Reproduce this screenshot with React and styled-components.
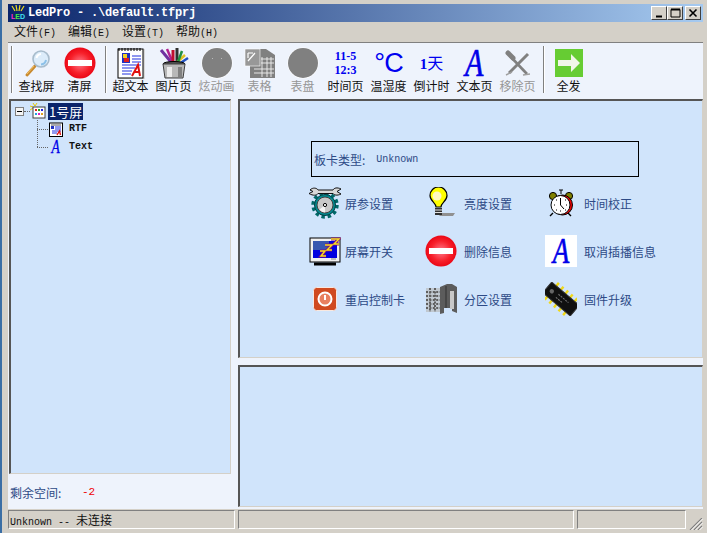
import React from "react";
import styled, { createGlobalStyle } from "styled-components";

const cjk = `"Noto Sans CJK SC", "Liberation Sans", sans-serif`;
const mono = `"Liberation Mono", "Noto Sans CJK SC", monospace`;
const paneBlue = "#d0e4fb";
const clientBlue = "#eef3fc";
const linkBlue = "#2d4a86";

const GlobalStyle = createGlobalStyle`
  html, body { margin: 0; padding: 0; background: #d4d0c8; }
  * { box-sizing: border-box; }
`;

const Frame = styled.div`
  width: 707px;
  height: 533px;
  overflow: hidden;
  display: flex;
  flex-direction: column;
  padding: 4px 4px 3px 6px;
  border-left: 2px solid #3a6ea5;
  background: #d4d0c8;
  font-family: ${cjk};
  font-size: 12px;
`;

const TitleBar = styled.div`
  height: 18px;
  display: flex;
  align-items: center;
  padding: 0 2px 0 1px;
  background: linear-gradient(90deg, #0a246a, #a6caf0);
  flex-shrink: 0;
`;
const Logo = styled.div`
  width: 18px;
  height: 17px;
  display: flex;
  flex-direction: column;
  align-items: center;
  margin-right: 1px;
`;
const LogoText = styled.div`
  font: bold 7px/7px "Liberation Sans", sans-serif;
  letter-spacing: 0;
`;
const LogoLetter = styled.span`
  color: ${(p) => p.$color};
`;
const TitleText = styled.div`
  flex: 1;
  color: #fff;
  font: bold 12px/18px ${mono};
  letter-spacing: -0.2px;
  white-space: pre;
`;
const CaptionButtons = styled.div`
  display: flex;
`;
const CaptionButton = styled.div`
  width: ${(p) => p.$w || 16}px;
  height: 14px;
  margin-left: ${(p) => p.$gap || 0}px;
  background: #d4d0c8;
  border: 1px solid;
  border-color: #fff #404040 #404040 #fff;
  display: flex;
  align-items: center;
  justify-content: center;
`;

const MenuBar = styled.div`
  height: 20px;
  display: flex;
  align-items: center;
  padding-left: 6px;
  flex-shrink: 0;
`;
const MenuItem = styled.div`
  width: 54px;
  color: #111;
  line-height: 20px;
`;
const MenuKey = styled.span`
  font-family: ${mono};
  font-size: 10px;
`;

const Toolbar = styled.div`
  height: 57px;
  flex-shrink: 0;
  display: flex;
  align-items: flex-start;
  padding-top: 4px;
  background: ${clientBlue};
  border-top: 1px solid #808080;
`;
const ToolSep = styled.div`
  width: 2px;
  height: 47px;
  margin: -1px 2px 0 3px;
  border-left: 1px solid #808080;
  border-right: 1px solid #fff;
`;
const ToolGroup = styled.div`
  display: flex;
  padding-right: 1px;
`;
const ToolButton = styled.div`
  width: 43px;
  display: flex;
  flex-direction: column;
  align-items: center;
`;
const ToolIcon = styled.div`
  width: 43px;
  height: 32px;
  display: flex;
  align-items: center;
  justify-content: center;
  flex-direction: column;
  color: #0000f0;
`;
const ToolLabel = styled.div`
  height: 16px;
  margin-top: -1px;
  line-height: 16px;
  white-space: nowrap;
  color: ${(p) => (p.$off ? "#969696" : "#111")};
`;
const ClockText = styled.div`
  font: bold 12px/14px "Liberation Serif", serif;
  color: #0000f0;
`;
const TempText = styled.div`
  font: 27px/32px "Liberation Sans", sans-serif;
  color: #0000f0;
  letter-spacing: -1px;
`;
const DayText = styled.div`
  font: 16px/18px "Noto Sans CJK SC", serif;
  color: #0000f0;
`;
const DayNumber = styled.span`
  font: bold 15px/18px "Liberation Serif", serif;
`;
const ItalicA = styled.span`
  display: inline-block;
  font: italic normal ${(p) => p.$size}px/${(p) => p.$size}px "Liberation Serif", serif;
  -webkit-text-stroke: ${(p) => p.$size / 60}px #0000e8;
  color: #0000e8;
  transform: scaleX(0.75);
`;

const Body = styled.div`
  flex: 1;
  display: grid;
  grid-template-columns: 223px 465px;
  column-gap: 7px;
  background: ${clientBlue};
  padding-bottom: 2px;
  min-height: 0;
`;
const LeftColumn = styled.div`
  display: flex;
  flex-direction: column;
  padding-left: 1px;
`;
const RightColumn = styled.div`
  display: flex;
  flex-direction: column;
  gap: 7px;
`;
const Sunken = styled.div`
  background: ${paneBlue};
  border: 2px solid;
  border-color: #555 #d4d0c8 #d4d0c8 #555;
  border-width: 2px 1px 1px 2px;
`;
const TreePane = styled(Sunken)`
  height: 375px;
  padding: 1px 0 0 4px;
`;
const TreeRoot = styled.div`
  display: flex;
  align-items: center;
  height: 18px;
`;
const Expander = styled.div`
  width: 9px;
  height: 9px;
  border: 1px solid #808080;
  background: #f4f4f4;
  display: flex;
  align-items: center;
  justify-content: center;
`;
const ExpanderDash = styled.div`
  width: 5px;
  height: 1px;
  background: #000;
`;
const RootDots = styled.div`
  width: 6px;
  border-top: 1px dotted #666;
`;
const Selected = styled.div`
  margin-left: 2px;
  padding: 0 1px;
  background: #0a246a;
  color: #fff;
  line-height: 17px;
  font-size: 13px;
`;
const TreeChildren = styled.div`
  margin-left: 22px;
`;
const TreeRow = styled.div`
  display: flex;
  align-items: center;
  height: 18px;
`;
const Branch = styled.div`
  width: 11px;
  height: 18px;
  flex-shrink: 0;
  background:
    repeating-linear-gradient(180deg, #666 0 1px, transparent 1px 2px) 0 0 / 1px ${(p) => (p.$last ? "9px" : "18px")} no-repeat,
    repeating-linear-gradient(90deg, #666 0 1px, transparent 1px 2px) 0 9px / 11px 1px no-repeat;
`;
const TreeIconBox = styled.div`
  width: 15px;
  height: 16px;
  display: flex;
  align-items: center;
  justify-content: center;
`;
const TreeLabel = styled.div`
  margin-left: 6px;
  font: bold 10px/16px ${mono};
  color: #111;
`;
const SpaceRow = styled.div`
  flex: 1;
  display: flex;
  align-items: center;
  padding: 3px 0 0 1px;
  color: ${linkBlue};
`;
const SpaceName = styled.span`
  width: 72px;
`;
const SpaceValue = styled.span`
  color: #f00000;
  font-family: ${mono};
  font-size: 11px;
`;

const ActionsPane = styled(Sunken)`
  height: 259px;
  padding: 40px 0 0 71px;
  display: flex;
  flex-direction: column;
`;
const BoardBox = styled.div`
  width: 328px;
  height: 36px;
  border: 1px solid #000;
  display: flex;
  align-items: center;
  padding-left: 2px;
  color: ${linkBlue};
`;
const BoardValue = styled.span`
  font-family: ${mono};
  font-size: 10px;
  margin-left: 11px;
`;
const ActionGrid = styled.div`
  display: grid;
  grid-template-columns: 116px 120px auto;
  grid-auto-rows: 48px;
  margin: 2px 0 0 -2px;
`;
const ActionItem = styled.div`
  display: flex;
  align-items: center;
  gap: ${(p) => p.$gap}px;
  color: ${linkBlue};
`;
const ActionIcon = styled.div`
  width: 32px;
  height: 32px;
  flex-shrink: 0;
  display: flex;
  align-items: center;
  justify-content: center;
  background: ${(p) => (p.$tile ? "#fff" : "transparent")};
`;
const LogPane = styled(Sunken)`
  flex: 1;
`;

const StatusBar = styled.div`
  height: 20px;
  margin-top: 1px;
  flex-shrink: 0;
  display: flex;
  gap: 3px;
`;
const StatusCell = styled.div`
  width: ${(p) => p.$w}px;
  height: 19px;
  border: 1px solid;
  border-color: #808080 #fff #fff #808080;
  padding-left: 1px;
  color: #111;
  line-height: 17px;
  white-space: nowrap;
`;
const StatusMono = styled.span`
  font-family: ${mono};
  font-size: 10px;
`;
const Grip = styled.div`
  flex: 1;
  display: flex;
  align-items: flex-end;
  justify-content: flex-end;
`;

const NoEntry = ({ id }) => (
  <svg width="32" height="32" viewBox="0 0 32 32">
    <defs>
      <radialGradient id={id} cx="0.5" cy="0.5" r="0.55">
        <stop offset="0" stopColor="#ff7a8a" />
        <stop offset="0.6" stopColor="#f7202a" />
        <stop offset="1" stopColor="#e80010" />
      </radialGradient>
    </defs>
    <circle cx="16" cy="16" r="15.5" fill={`url(#${id})`} />
    <rect x="4" y="13" width="24" height="6" fill="#fff" />
  </svg>
);

const Magnifier = () => (
  <svg width="32" height="32" viewBox="0 0 32 32">
    <path d="M6 28 L14 19" stroke="#c88a30" strokeWidth="3" strokeLinecap="round" />
    <path d="M6 27 L13 19" stroke="#f2c060" strokeWidth="1" />
    <circle cx="20" cy="12" r="8" fill="#dcecfa" stroke="#a8bccc" strokeWidth="1.6" />
    <path d="M15.5 11 A5 5 0 0 1 20 7" fill="none" stroke="#fff" strokeWidth="2" />
    <path d="M25 13 A5.5 5.5 0 0 1 20 17.5" fill="none" stroke="#8cc0e8" strokeWidth="2" />
  </svg>
);

const Notebook = () => (
  <svg width="32" height="32" viewBox="0 0 32 32">
    <rect x="4" y="2" width="26" height="30" fill="#d8d8d8" />
    <rect x="3" y="2" width="25" height="29" fill="#fff" stroke="#000" />
    <path d="M4 1V4M7 1V4M10 1V4M13 1V4M16 1V4M19 1V4M22 1V4M25 1V4" stroke="#000" />
    <rect x="7" y="6" width="8" height="10" fill="#2030c0" />
    <rect x="8" y="7" width="4" height="4" fill="#f0d020" />
    <rect x="9" y="11" width="5" height="4" fill="#e02020" />
    <path d="M17 9H26M17 12H26M17 15H26M7 18H26M7 21H20M7 24H17M7 27H16" stroke="#2030e0" strokeWidth="1.2" />
    <path d="M17 29L23 18L25 29M19.5 25H24.5" fill="none" stroke="#e01010" strokeWidth="2" />
  </svg>
);

const PencilCup = () => (
  <svg width="32" height="32" viewBox="0 0 32 32">
    <path d="M3 3L13 15" stroke="#7030a0" strokeWidth="3" />
    <path d="M9 2L15 16" stroke="#b02090" strokeWidth="2.5" />
    <path d="M15 3V16" stroke="#c01030" strokeWidth="3" />
    <path d="M19 1V15" stroke="#303030" strokeWidth="3" />
    <path d="M27 8L17 17" stroke="#e0c020" strokeWidth="2.5" />
    <path d="M30 11L21 17" stroke="#2050c0" strokeWidth="2.5" />
    <path d="M24 4L20 15" stroke="#209040" strokeWidth="2.5" />
    <ellipse cx="16" cy="17" rx="11" ry="2.5" fill="#505050" stroke="#000" />
    <path d="M5 17L7 31H25L27 17Z" fill="#b8b8b8" stroke="#404040" />
    <rect x="9" y="20" width="5" height="10" fill="#ececec" />
    <rect x="20" y="20" width="4" height="10" fill="#808080" />
  </svg>
);

const GreyDisc = ({ eyes }) => (
  <svg width="32" height="32" viewBox="0 0 32 32">
    <circle cx="16" cy="16" r="15.5" fill="#fff" />
    <circle cx="16" cy="16" r="15" fill="#808080" />
    {eyes && <path d="M11 11h1v1h-1zM20 11h1v1h-1z" fill="#bbb" />}
  </svg>
);

const GreyTable = () => (
  <svg width="32" height="32" viewBox="0 0 32 32">
    <path d="M1 2H22L31 8V31H6V19H1Z" fill="#808080" />
    <rect x="1" y="2" width="15" height="17" fill="#989898" stroke="#fff" strokeWidth="0.6" />
    <path d="M4 14L11 6M4 6H9M4 6V11" stroke="#fff" strokeWidth="1.2" fill="none" />
    <path d="M17 12H30M17 16H30M10 22H30M10 26H30M18 10V30M23 10V30M27 10V30" stroke="#f0f0f0" strokeWidth="0.9" />
  </svg>
);

const GreyTools = () => (
  <svg width="32" height="32" viewBox="0 0 32 32">
    <path d="M8 9L25 27" stroke="#808080" strokeWidth="2.6" />
    <path d="M6 6L11 11" stroke="#808080" strokeWidth="5" strokeLinecap="round" />
    <path d="M26 7L7 26" stroke="#808080" strokeWidth="3" />
    <path d="M4 28L10 25" stroke="#a0a0a0" strokeWidth="1.5" />
    <path d="M21 28L28 27" stroke="#a0a0a0" strokeWidth="1.5" />
  </svg>
);

const GreenArrow = () => (
  <svg width="28" height="28" viewBox="0 0 28 28">
    <rect width="28" height="28" fill="#66cc33" />
    <path d="M3 11H16V5L25 14L16 23V17H3Z" fill="#f0f6e8" />
  </svg>
);

const GearWrench = () => (
  <svg width="32" height="32" viewBox="0 0 32 32">
    <circle cx="16" cy="18" r="12" fill="none" stroke="#006868" strokeWidth="3.4" strokeDasharray="3.4 2.9" />
    <circle cx="16" cy="18" r="10.5" fill="#008a90" stroke="#003c40" />
    <circle cx="16" cy="18" r="8" fill="#c8c8c8" stroke="#404040" />
    <path d="M16 18L10.5 22.5A8 8 0 0 0 16 25.5Z" fill="#f4f4f4" />
    <circle cx="16" cy="18" r="1.6" fill="#fff" stroke="#000" />
    <path d="M1 3C4 0 8 1 9 3H24C25 1 28 0 32 2L28 4.5L32 7C28 9 25 8 24 6.5H9C8 8.5 4 9 0 6.5L4 4.5Z" fill="#d8d8d8" stroke="#111" />
  </svg>
);

const Bulb = () => (
  <svg width="32" height="32" viewBox="0 0 32 32">
    <path d="M14 29H28L30 26H17Z" fill="#909090" />
    <path d="M11 20C11 16 5 14 5 8.5A8.5 8.5 0 0 1 22 8.5C22 14 16 16 16 20Z" fill="#ffff00" stroke="#000" strokeWidth="1.2" />
    <circle cx="12" cy="9" r="4.5" fill="#fff8c0" />
    <path d="M10 21H17V28H10Z" fill="#303030" />
    <path d="M10 23H17M10 25.5H17" stroke="#e0e0e0" />
  </svg>
);

const AlarmClock = () => (
  <svg width="32" height="32" viewBox="0 0 32 32">
    <circle cx="8" cy="9" r="3.6" fill="#808000" stroke="#000" />
    <circle cx="24" cy="9" r="3.6" fill="#808000" stroke="#000" />
    <path d="M16 3V7M14 3H18" stroke="#000" />
    <circle cx="17.5" cy="18" r="10" fill="#f00000" stroke="#000" />
    <circle cx="15.5" cy="18" r="9.5" fill="#fff" stroke="#000" />
    <path d="M15.5 11V18L19 22" stroke="#000" fill="none" />
    <path d="M9 18h1M21 18h1M15 24h1M11 13h1M20 13h1M11 23h1M20 23h1" stroke="#000" />
    <path d="M8 26L5 29M23 26L26 29" stroke="#000" strokeWidth="1.4" />
  </svg>
);

const Monitor = () => (
  <svg width="32" height="32" viewBox="0 0 32 32">
    <rect x="1" y="3" width="30" height="24" fill="#f0f0f0" stroke="#000" />
    <rect x="4" y="6" width="24" height="17" fill="#0000e0" />
    <rect x="4" y="6" width="16" height="9" fill="#3858b0" />
    <path d="M5 29H27" stroke="#000" strokeWidth="3" />
    <path d="M22 24h5" stroke="#888" />
    <path d="M22 4H30L25 9H30M16 10H23L18 15H23M11 16H16L12 21H17" fill="none" stroke="#7a1080" strokeWidth="3" />
    <path d="M22 4H30L25 9H30M16 10H23L18 15H23M11 16H16L12 21H17" fill="none" stroke="#f8e020" strokeWidth="1.4" />
  </svg>
);

const PowerTile = () => (
  <svg width="24" height="24" viewBox="0 0 24 24">
    <rect x="0.5" y="0.5" width="23" height="23" rx="3" fill="#d04a20" stroke="#f8e8e0" />
    <circle cx="12" cy="12" r="6.5" fill="#e88060" stroke="#fff" strokeWidth="2" />
    <path d="M12 8V13" stroke="#fff" strokeWidth="2" />
  </svg>
);

const GreyDoor = () => (
  <svg width="32" height="32" viewBox="0 0 32 32">
    <rect x="1" y="5" width="14" height="24" fill="#c0c8d0" />
    <path d="M1 9H15M1 13H15M1 17H15M1 21H15M1 25H15M5 5V29M10 5V29" stroke="#606060" strokeWidth="2" strokeDasharray="2 1.4" />
    <path d="M15 4L22 1H27L32 4V30L27 28V25H19V30L15 31Z" fill="#5c5c5c" />
    <path d="M25 8H29V26H25Z" fill="#c8c8c8" />
    <path d="M21 3V25" stroke="#303030" />
  </svg>
);

const Chip = () => (
  <svg width="32" height="34" viewBox="0 0 32 34">
    <g transform="rotate(40 16 17)">
      <path d="M4 11V6M10 11V6M16 11V6M22 11V6M28 11V6M4 23V28M10 23V28M16 23V28M22 23V28M28 23V28" stroke="#f0d818" strokeWidth="2.4" />
      <rect x="-2" y="10" width="36" height="14" fill="#101010" stroke="#333" />
      <circle cx="4" cy="17" r="2.2" fill="#666" />
      <path d="M11 15H24M11 19H20" stroke="#777" strokeDasharray="2 1" />
    </g>
  </svg>
);

const TreeScreen = () => (
  <svg width="16" height="16" viewBox="0 0 16 16">
    <path d="M3 0L5 3M0 3L3 4M7 0L5 3M0 7L3 5" stroke="#e8c800" />
    <rect x="3" y="4" width="12" height="11" fill="#fff" stroke="#404040" />
    <path d="M5 6h2v2H5z" fill="#e02020" />
    <path d="M8 6h2v2H8z" fill="#20a020" />
    <path d="M11 6h2v2h-2z" fill="#2020e0" />
    <path d="M5 10h2v2H5z" fill="#20a0e0" />
    <path d="M8 10h2v2H8z" fill="#e020c0" />
    <path d="M11 10h2v2h-2z" fill="#e0a020" />
  </svg>
);

const TreeDoc = () => (
  <svg width="14" height="15" viewBox="0 0 14 15">
    <rect x="0.5" y="1" width="13" height="13.5" fill="#fff" stroke="#000" />
    <path d="M2 3H12M2 5H4" stroke="#555" />
    <rect x="2" y="4" width="3" height="3" fill="#2030c0" />
    <path d="M6 5H12M6 7H12M3 9H12M3 11H8" stroke="#2030e0" />
    <path d="M8 13L10.5 9L11.5 13" fill="none" stroke="#e01010" strokeWidth="1.4" />
  </svg>
);

const tools = [
  { label: "超文本", icon: <Notebook /> },
  { label: "图片页", icon: <PencilCup /> },
  { label: "炫动画", off: true, icon: <GreyDisc eyes /> },
  { label: "表格", off: true, icon: <GreyTable /> },
  { label: "表盘", off: true, icon: <GreyDisc /> },
  {
    label: "时间页",
    icon: (
      <>
        <ClockText>11-5</ClockText>
        <ClockText>12:3</ClockText>
      </>
    )
  },
  { label: "温湿度", icon: <TempText>°C</TempText> },
  {
    label: "倒计时",
    icon: (
      <DayText>
        <DayNumber>1</DayNumber>天
      </DayText>
    )
  },
  { label: "文本页", icon: <ItalicA $size={40}>A</ItalicA> },
  { label: "移除页", off: true, icon: <GreyTools /> }
];

const actions = [
  { label: "屏参设置", gap: 4, icon: <GearWrench /> },
  { label: "亮度设置", gap: 7, icon: <Bulb /> },
  { label: "时间校正", gap: 7, icon: <AlarmClock /> },
  { label: "屏幕开关", gap: 4, icon: <Monitor /> },
  { label: "删除信息", gap: 7, icon: <NoEntry id="noEntryAction" /> },
  { label: "取消插播信息", gap: 7, tile: true, icon: <ItalicA $size={36}>A</ItalicA> },
  { label: "重启控制卡", gap: 4, icon: <PowerTile /> },
  { label: "分区设置", gap: 7, icon: <GreyDoor /> },
  { label: "固件升级", gap: 7, icon: <Chip /> }
];

const menus = [
  ["文件", "(F)"],
  ["编辑", "(E)"],
  ["设置", "(T)"],
  ["帮助", "(H)"]
];

const App = () => (
  <Frame>
    <GlobalStyle />
    <TitleBar>
      <Logo>
        <svg width="16" height="8" viewBox="0 0 16 8">
          <path d="M2 1L5 6M6 0L7 6M10 0L9 6M14 1L11 6" stroke="#f0e020" strokeWidth="1.2" />
        </svg>
        <LogoText>
          <LogoLetter $color="#ff30d0">L</LogoLetter>
          <LogoLetter $color="#40f040">E</LogoLetter>
          <LogoLetter $color="#40e0f0">D</LogoLetter>
        </LogoText>
      </Logo>
      <TitleText>LedPro - .\default.tfprj</TitleText>
      <CaptionButtons>
        <CaptionButton>
          <svg width="10" height="10" viewBox="0 0 10 10">
            <path d="M2 8.5H8" stroke="#000" strokeWidth="2" />
          </svg>
        </CaptionButton>
        <CaptionButton>
          <svg width="11" height="10" viewBox="0 0 11 10">
            <path d="M1 1.5H10V9H1Z" fill="none" stroke="#000" />
            <path d="M1 1.5H10" stroke="#000" strokeWidth="2" />
          </svg>
        </CaptionButton>
        <CaptionButton $gap={2}>
          <svg width="10" height="10" viewBox="0 0 10 10">
            <path d="M1.5 1.5L8.5 8.5M8.5 1.5L1.5 8.5" stroke="#000" strokeWidth="1.6" />
          </svg>
        </CaptionButton>
      </CaptionButtons>
    </TitleBar>

    <MenuBar>
      {menus.map(([name, key]) => (
        <MenuItem key={name}>
          {name}
          <MenuKey>{key}</MenuKey>
        </MenuItem>
      ))}
    </MenuBar>

    <Toolbar>
      <ToolSep />
      <ToolGroup>
        <ToolButton>
          <ToolIcon>
            <Magnifier />
          </ToolIcon>
          <ToolLabel>查找屏</ToolLabel>
        </ToolButton>
        <ToolButton>
          <ToolIcon>
            <NoEntry id="noEntryTool" />
          </ToolIcon>
          <ToolLabel>清屏</ToolLabel>
        </ToolButton>
      </ToolGroup>
      <ToolSep />
      <ToolGroup>
        {tools.map((t) => (
          <ToolButton key={t.label}>
            <ToolIcon>{t.icon}</ToolIcon>
            <ToolLabel $off={t.off}>{t.label}</ToolLabel>
          </ToolButton>
        ))}
      </ToolGroup>
      <ToolSep />
      <ToolGroup>
        <ToolButton>
          <ToolIcon>
            <GreenArrow />
          </ToolIcon>
          <ToolLabel>全发</ToolLabel>
        </ToolButton>
      </ToolGroup>
    </Toolbar>

    <Body>
      <LeftColumn>
        <TreePane>
          <TreeRoot>
            <Expander>
              <ExpanderDash />
            </Expander>
            <RootDots />
            <TreeScreen />
            <Selected>1号屏</Selected>
          </TreeRoot>
          <TreeChildren>
            <TreeRow>
              <Branch />
              <TreeIconBox>
                <TreeDoc />
              </TreeIconBox>
              <TreeLabel>RTF</TreeLabel>
            </TreeRow>
            <TreeRow>
              <Branch $last />
              <TreeIconBox>
                <ItalicA $size={18}>A</ItalicA>
              </TreeIconBox>
              <TreeLabel>Text</TreeLabel>
            </TreeRow>
          </TreeChildren>
        </TreePane>
        <SpaceRow>
          <SpaceName>剩余空间:</SpaceName>
          <SpaceValue>-2</SpaceValue>
        </SpaceRow>
      </LeftColumn>

      <RightColumn>
        <ActionsPane>
          <BoardBox>
            板卡类型:
            <BoardValue>Unknown</BoardValue>
          </BoardBox>
          <ActionGrid>
            {actions.map((a) => (
              <ActionItem key={a.label} $gap={a.gap}>
                <ActionIcon $tile={a.tile}>{a.icon}</ActionIcon>
                {a.label}
              </ActionItem>
            ))}
          </ActionGrid>
        </ActionsPane>
        <LogPane />
      </RightColumn>
    </Body>

    <StatusBar>
      <StatusCell $w={228}>
        <StatusMono>Unknown -- </StatusMono>未连接
      </StatusCell>
      <StatusCell $w={337} />
      <StatusCell $w={109} />
      <Grip>
        <svg width="14" height="12" viewBox="0 0 14 12">
          <path d="M1 12L13 0M5 12L13 4M9 12L13 8" stroke="#808080" strokeWidth="1.2" />
          <path d="M2.5 12L14 0.5M6.5 12L14 4.5M10.5 12L14 8.5" stroke="#fff" />
        </svg>
      </Grip>
    </StatusBar>
  </Frame>
);

export default App;
